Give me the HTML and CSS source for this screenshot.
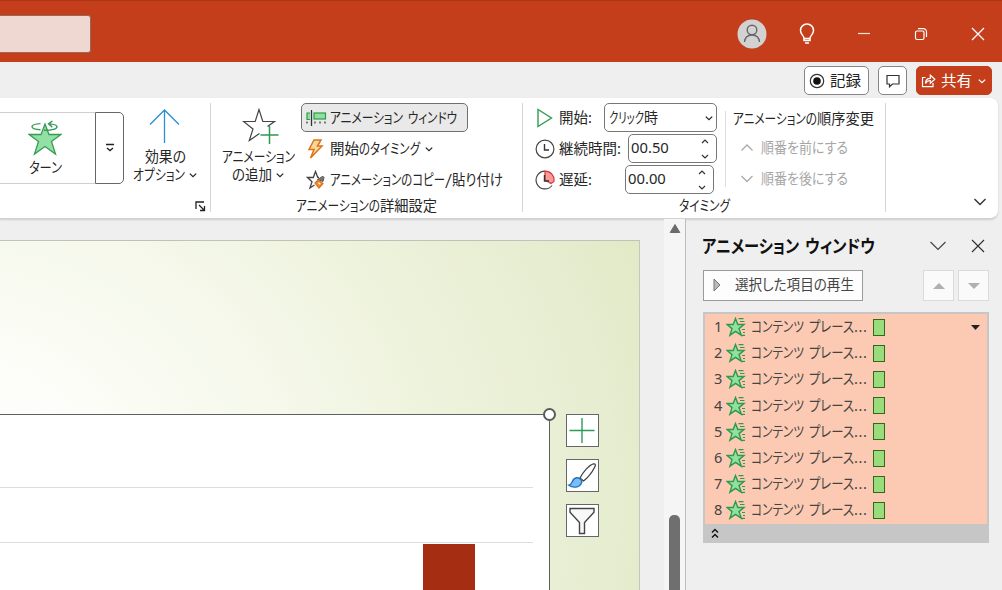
FILE: index.html
```html
<!DOCTYPE html>
<html lang="ja">
<head>
    <meta charset="UTF-8">
    <meta name="viewport" content="width=device-width, initial-scale=1.0">
    <title>アニメーション ウィンドウ</title>
    <link rel="stylesheet" href="styles.css">
</head>
<body>
    <svg class="defs" width="0" height="0">
        <symbol id="chev" viewBox="0 0 10 10"><path d="M1.8 3.6 5 6.6 8.2 3.6" fill="none" stroke="currentColor" stroke-width="1.3"/></symbol>
        <symbol id="effect" viewBox="0 0 20 20">
            <path d="M9.5 1.5 11.8 7.5H18L13 11.6l2.3 6.6-5.8-3.8-5.6 3.8L6 11.6 1 7.5h6.2z" fill="#90e0a0" stroke="#2f9a4c" stroke-width="1.4"/>
            <path d="M12.500 1.600h5M14 4.500h4.500M16 12.500h3M17 15.500h2M16 18.400h3" stroke="#2f9a4c" stroke-width="1.200"/>
        </symbol>
    </svg>

    <div class="titlebar">
        <div class="search"></div>
        <div class="window-tools">
            <svg class="avatar" width="30" height="30" viewBox="0 0 30 30"><circle cx="15" cy="15" r="14.500" fill="#d2d2d2"/><circle cx="15" cy="11" r="4.800" fill="none" stroke="#666" stroke-width="1.400"/><path d="M7.500 23c.5-4.500 3.500-7 7.500-7s7 2.500 7.500 7" fill="none" stroke="#666" stroke-width="1.400"/></svg>
            <svg class="bulb" width="16" height="22" viewBox="0 0 16 22"><path d="M5 15.500C5 12.500 1.500 11.500 1.500 7.500a6.500 6.500 0 0 1 13 0c0 4-3.500 5-3.500 8zM5 15.500V17.500h6v-2M6 20h4" fill="none" stroke="#fff" stroke-width="1.500"/></svg>
            <svg class="minimize" width="14" height="14" viewBox="0 0 14 14"><path d="M1 6.500h12" stroke="#fbe3da" stroke-width="1.200"/></svg>
            <svg class="restore" width="14" height="14" viewBox="0 0 14 14"><rect x="1.500" y="4" width="8.500" height="8.500" rx="1.500" fill="none" stroke="#fff" stroke-width="1.200"/><path d="M4 1.700h5.500a3 3 0 0 1 3 3V10" fill="none" stroke="#fff" stroke-width="1.200"/></svg>
            <svg class="close" width="14" height="14" viewBox="0 0 14 14"><path d="M1 1l12 12M13 1 1 13" stroke="#fff" stroke-width="1.300"/></svg>
        </div>
    </div>

    <div class="tabrow">
        <button class="tab-btn record">
            <svg width="16" height="16" viewBox="0 0 16 16"><circle cx="8" cy="8" r="6.700" fill="none" stroke="#333" stroke-width="1.200"/><circle cx="8" cy="8" r="3.800" fill="#111"/></svg>
            <span class="fit" data-w="31">記録</span>
        </button>
        <button class="tab-btn comment">
            <svg width="14" height="14" viewBox="0 0 14 14"><path d="M1 1.500h12v8.500H6.500L3.500 12.800V10H1z" fill="none" stroke="#333" stroke-width="1.200"/></svg>
        </button>
        <button class="tab-btn share">
            <svg width="15" height="15" viewBox="0 0 15 15"><path d="M4.500 4.500H1.500v9.200h10.500V10" fill="none" stroke="#fff" stroke-width="1.200"/><path d="M4.500 10.500C4.500 7 6.500 5.300 9.300 5.300V2.200L13.800 6.300 9.300 10.300V7.500C7 7.500 5.500 8.500 4.500 10.500z" fill="none" stroke="#fff" stroke-width="1.200"/></svg>
            <span class="fit" data-w="31">共有</span>
            <svg class="chev" width="10" height="10"><use href="#chev"/></svg>
        </button>
    </div>

    <div class="ribbon">
        <div class="group group-gallery">
            <div class="gallery">
                <div class="gallery-item">
                    <svg width="34" height="36" viewBox="0 0 34 36">
                        <path d="M17 4 21 14.500H33L23.500 21.500 27.500 34 17 26.500 6.500 34 10.500 21.500 1 14.500H13z" fill="#92e0a4" stroke="#379b55" stroke-width="1.300"/>
                        <path d="M12.500 9.800C7 9.500 4 8.200 4 6.600S7 4 12.500 3.600M16 10.300c6 0 13-1 13-3.500 0-1.500-3-2.500-8-2.900M24.500 1 20.500 3.900l3.800 3.200" fill="none" stroke="#379b55" stroke-width="1.400"/>
                    </svg>
                    <span class="fit" data-w="33">ターン</span>
                </div>
                <div class="gallery-more">
                    <svg width="10" height="10" viewBox="0 0 10 10"><path d="M1 1.500h8M2 5l3 2.600L8 5" fill="none" stroke="#222" stroke-width="1.300"/></svg>
                </div>
            </div>
            <div class="big-btn effect-options">
                <svg width="34" height="36" viewBox="0 0 34 36"><path d="M16.500 35V2M2 16.500 16.500 2 31 16.500" fill="none" stroke="#2c8ed4" stroke-width="1.300"/></svg>
                <div class="line"><span class="fit" data-w="41">効果の</span></div>
                <div class="line"><span class="fit" data-w="52">オプション</span><svg class="chev" width="10" height="10"><use href="#chev"/></svg></div>
            </div>
            <svg class="launcher" width="11" height="11" viewBox="0 0 11 11"><path d="M1 8V1h8M4 4l5 5M9.500 5v4.500H5" fill="none" stroke="#222" stroke-width="1.300"/></svg>
        </div>

        <div class="group group-advanced">
            <div class="group-body">
                <div class="big-btn add-animation">
                    <svg width="38" height="36" viewBox="0 0 38 36"><path d="M25.500 18.500 32.500 13.500H20.800L17 1.500 13.200 13.500H1.500L11 21 7.300 32.500 17.500 25.500" fill="none" stroke="#444" stroke-width="1.200"/><path d="M27.500 18v18M18.500 27h18" stroke="#2f9a4c" stroke-width="1.500"/></svg>
                    <div class="line"><span class="fit" data-w="73">アニメーション</span></div>
                    <div class="line"><span class="fit" data-w="40">の追加</span><svg class="chev" width="10" height="10"><use href="#chev"/></svg></div>
                </div>
                <div class="commands">
                    <div class="command active">
                        <svg width="22" height="16" viewBox="0 0 22 16"><path d="M5.500 0v16" stroke="#333" stroke-width="1.300"/><path d="M4 3H1v6.500h3" fill="#90e0a0" stroke="#2f9a4c" stroke-width="1.200"/><rect x="8" y="3" width="11.500" height="6" fill="#90e0a0" stroke="#2f9a4c" stroke-width="1.200"/><path d="M1 11.500v2M9 11.500v2M14 11.500v2M19 11.500v2" stroke="#333" stroke-width="1.200"/></svg>
                        <span class="fit" data-w="73">アニメーション</span><span class="fit second" data-w="49">ウィンドウ</span>
                    </div>
                    <div class="command">
                        <svg width="22" height="20" viewBox="0 0 22 20"><path d="M8 1h7L11.500 7H16L4.500 19 8 10.500H3z" fill="#fbd7a0" stroke="#dd7418" stroke-width="1.500"/></svg>
                        <span class="fit" data-w="29">開始</span><span class="fit" data-w="61">のタイミング</span><svg class="chev" width="10" height="10"><use href="#chev"/></svg>
                    </div>
                    <div class="command">
                        <svg width="22" height="20" viewBox="0 0 22 20"><path d="M13 7.500h-1.200L9.500 1.500 7.300 7.500H1.500l4.500 4.300-2 6.200 4.500-3" fill="none" stroke="#444" stroke-width="1.300"/><path d="M11.500 9.500 15 7.500l1.500-1.500 1.500 1.500-1 4z" fill="#777" stroke="#555"/><path d="M9 13l3-3 5 3.500-4 4.500z" fill="#f08a2a" stroke="#dd7418" stroke-width="1.200"/><path d="M12.500 12.800l1.800 1.500" stroke="#fff" stroke-width="1.300"/></svg>
                        <span class="fit" data-w="115">アニメーションのコピー</span><span class="fit" data-w="7">/</span><span class="fit" data-w="51">貼り付け</span>
                    </div>
                </div>
            </div>
            <div class="caption"><span class="fit" data-w="84">アニメーションの</span><span class="fit" data-w="57">詳細設定</span></div>
        </div>

        <div class="group group-timing">
            <div class="group-body">
                <div class="timing-fields">
                    <div class="field">
                        <svg width="20" height="20" viewBox="0 0 20 20"><path d="M3 1.500v17L16.500 10z" fill="#fff" stroke="#379b55" stroke-width="1.400"/></svg>
                        <label class="name-start"><span class="fit" data-w="29">開始</span>:</label>
                        <div class="box start-box"><span class="fit" data-w="35">クリック</span><span class="fit" data-w="14">時</span><svg class="chev" width="10" height="10"><use href="#chev"/></svg></div>
                    </div>
                    <div class="field">
                        <svg width="20" height="20" viewBox="0 0 20 20"><circle cx="10" cy="10" r="8.900" fill="#fff" stroke="#444" stroke-width="1.200"/><path d="M9.500 5v6H14" fill="none" stroke="#333" stroke-width="1.400"/></svg>
                        <label class="name-duration"><span class="fit" data-w="58">継続時間</span>:</label>
                        <div class="box spin"><span class="value">00.50</span><svg width="8" height="24" viewBox="0 0 8 24"><path d="M1 6l3-3 3 3M1 18l3 3 3-3" fill="none" stroke="#333" stroke-width="1.200"/></svg></div>
                    </div>
                    <div class="field">
                        <svg width="20" height="20" viewBox="0 0 20 20"><path d="M10 1.100A8.900 8.900 0 1 0 17 15.500" fill="#fff" stroke="#444" stroke-width="1.200"/><path d="M10 10V1.100A8.900 8.900 0 0 1 18.900 11.500L16 13.500z" fill="#f79a9a" stroke="#d93636" stroke-width="1.200"/><path d="M9.500 5v6H14" fill="none" stroke="#333" stroke-width="1.400"/></svg>
                        <label class="name-delay"><span class="fit" data-w="29">遅延</span>:</label>
                        <div class="box spin"><span class="value">00.00</span><svg width="8" height="24" viewBox="0 0 8 24"><path d="M1 6l3-3 3 3M1 18l3 3 3-3" fill="none" stroke="#333" stroke-width="1.200"/></svg></div>
                    </div>
                </div>
                <div class="reorder">
                    <div class="reorder-title"><span class="fit" data-w="84">アニメーションの</span><span class="fit" data-w="57">順序変更</span></div>
                    <div class="reorder-row"><svg width="14" height="10" viewBox="0 0 14 10"><path d="M1.500 7.500 7 2l5.500 5.500" fill="none" stroke="#aaa" stroke-width="1.300"/></svg><span class="fit" data-w="87">順番を前にする</span></div>
                    <div class="reorder-row"><svg width="14" height="10" viewBox="0 0 14 10"><path d="M1.500 2 7 7.500 12.500 2" fill="none" stroke="#aaa" stroke-width="1.300"/></svg><span class="fit" data-w="87">順番を後にする</span></div>
                </div>
            </div>
            <div class="caption"><span class="fit" data-w="51">タイミング</span></div>
        </div>
        <svg class="collapse" width="14" height="10" viewBox="0 0 14 10"><path d="M1.500 2 7 7.500 12.500 2" fill="none" stroke="#333" stroke-width="1.400"/></svg>
    </div>

    <div class="workspace">
        <div class="canvas">
            <div class="slide">
                <div class="chart">
                    <div class="handle"></div>
                    <div class="gridline"></div>
                    <div class="gridline"></div>
                    <div class="bar"></div>
                </div>
                <div class="chart-tools">
                    <div class="chart-tool"><svg width="31" height="31" viewBox="0 0 31 31"><path d="M15 3v25M2.500 15.500h25" stroke="#2f9a58" stroke-width="1.400"/></svg></div>
                    <div class="chart-tool"><svg width="31" height="31" viewBox="0 0 31 31"><path d="M13 18C16 12 22 5 26.500 3.800 29 3.500 28.500 6 27.500 7.500 25 12.500 21 17.500 16.500 21z" fill="#fff" stroke="#444" stroke-width="1.300"/><path d="M1.800 25.200C6 24.500 4.500 18.500 9.500 17.800c4-.3 6.500 3.200 4.500 6.200-2.500 4-8.500 4-12.200 1.200z" fill="#7dbcf4" stroke="#1c74bd" stroke-width="1.400"/></svg></div>
                    <div class="chart-tool"><svg width="31" height="31" viewBox="0 0 31 31"><path d="M3 3.500h24v3.700L17.500 17.500v11h-5v-11L3 7.200z" fill="#f8f8f8" stroke="#444" stroke-width="1.400"/></svg></div>
                </div>
            </div>
        </div>
        <div class="scrollbar">
            <svg width="12" height="9" viewBox="0 0 12 9"><path d="M6 .5 10.800 8.500H1.200z" fill="#6b6b6b" stroke="#6b6b6b" stroke-linejoin="round"/></svg>
            <div class="thumb"></div>
        </div>
        <div class="pane">
            <div class="pane-head">
                <span class="fit" data-w="97">アニメーション</span><span class="fit second" data-w="70">ウィンドウ</span>
                <svg class="pane-menu" width="18" height="12" viewBox="0 0 18 12"><path d="M1.500 2 9 9.500 16.500 2" fill="none" stroke="#444" stroke-width="1.200"/></svg>
                <svg class="pane-close" width="14" height="14" viewBox="0 0 14 14"><path d="M1 1l12 12M13 1 1 13" stroke="#333" stroke-width="1.200"/></svg>
            </div>
            <div class="pane-actions">
                <div class="play"><svg width="8" height="14" viewBox="0 0 8 14"><path d="M1 1v12l6-6z" fill="#bbb" stroke="#777"/></svg><span class="fit" data-w="119">選択した項目の再生</span></div>
                <div class="move"><svg width="12" height="6" viewBox="0 0 12 6"><path d="M0 6 6 0l6 6z" fill="#b0b0b0"/></svg></div>
                <div class="move"><svg width="12" height="6" viewBox="0 0 12 6"><path d="M0 0l6 6 6-6z" fill="#b0b0b0"/></svg></div>
            </div>
            <div class="list">
                <div class="rows" id="rows"></div>
                <div class="list-foot"><svg width="8" height="11" viewBox="0 0 8 11"><path d="M1 4.500l3-3 3 3M1 9.500l3-3 3 3" fill="none" stroke="#111" stroke-width="1.400"/></svg></div>
            </div>
        </div>
    </div>
    <script src="script.js"></script>
</body>
</html>
```

FILE: styles.css
```css
* {
    box-sizing: border-box;
}

body {
    margin: 0;
    width: 1002px;
    height: 590px;
    overflow: hidden;
    background-color: #efefef;
    color: #262626;
    font-family: "Noto Sans", "Noto Sans CJK JP", sans-serif;
    font-size: 14.5px;
    line-height: 18px;
}

svg {
    display: block;
    flex: none;
}

.defs {
    position: absolute;
}

/* width is set from data-w */
.fit {
    display: inline-block;
    flex: none;
    white-space: nowrap;
    padding-bottom: 2px;
    font-family: "Noto Sans CJK JP", sans-serif;
    font-feature-settings: "palt";
    transform-origin: left center;
}

/* title bar */
.titlebar {
    display: flex;
    justify-content: space-between;
    height: 62px;
    padding-top: 15px;
    background-color: #c43e1c;
    border-top: 1px solid #ad3516;
}

.search {
    width: 91px;
    height: 38px;
    margin-top: -1px;
    background-color: #efd8d2;
    border: 1px solid #95685b;
    border-left: 0;
    border-radius: 0 3px 3px 0;
}

.window-tools {
    display: flex;
    align-items: center;
    height: 36px;
    padding-right: 17px;
}

.bulb {
    margin-left: 32px;
}

.minimize {
    margin-left: 42px;
}

.restore {
    margin-left: 43px;
}

.close {
    margin-left: 43px;
}

/* buttons above the ribbon */
.tabrow {
    display: flex;
    justify-content: flex-end;
    height: 36px;
    padding: 4px 10px 0 0;
}

.tab-btn {
    display: flex;
    align-items: center;
    height: 29px;
    padding: 0;
    border: 1px solid #868686;
    border-radius: 5px;
    background-color: #fff;
    color: #222;
    font-size: 15px;
}

.record {
    width: 65px;
    padding-left: 4px;
    gap: 5px;
}

.comment {
    width: 29px;
    margin-left: 9px;
    justify-content: center;
}

.share {
    width: 76px;
    margin-left: 9px;
    padding-left: 4px;
    gap: 5px;
    background-color: #c43e1c;
    border-color: #c43e1c;
    color: #fff;
}

/* ribbon */
.ribbon {
    display: flex;
    width: 998px;
    height: 121px;
    padding-top: 5px;
    background-color: #fff;
    border-bottom: 1px solid #d2d2d2;
    border-radius: 0 8px 8px 0;
    box-shadow: 0 1px 2px #ccc;
}

.group {
    height: 109px;
    border-right: 1px solid #d4d4d4;
}

.group-body {
    display: flex;
    height: 93px;
}

.caption {
    display: flex;
    justify-content: center;
}

.group-gallery {
    display: grid;
    grid-template-columns: 124px 1fr;
    grid-template-rows: 98px 11px;
    width: 211px;
}

.gallery {
    display: flex;
    height: 72px;
    margin-top: 9px;
}

.gallery-item {
    display: flex;
    flex-direction: column;
    align-items: center;
    width: 95px;
    padding: 7px 5px 0 0;
    border-top: 1px solid #cfcfcf;
    border-bottom: 1px solid #cfcfcf;
}

.gallery-item .fit {
    margin-top: 2px;
}

.gallery-more {
    display: flex;
    align-items: center;
    justify-content: center;
    width: 29px;
    border: 1px solid #666;
    border-radius: 0 5px 5px 0;
}

.big-btn {
    display: flex;
    flex-direction: column;
    align-items: center;
}

.big-btn .line {
    display: flex;
    align-items: center;
    height: 18px;
}

.big-btn .chev {
    margin-left: 3px;
}

.effect-options {
    padding: 5px 4px 0 0;
}

.effect-options > svg {
    margin-bottom: 4px;
}

.launcher {
    grid-column: 2;
    justify-self: end;
    margin-right: 4px;
}

.group-advanced {
    width: 312px;
}

.add-animation {
    width: 90px;
    padding: 5px 0 0 5px;
}

.add-animation > svg {
    margin: 0 0 4px 5px;
}

.command {
    display: flex;
    align-items: center;
    height: 31px;
    padding-left: 5px;
}

.command > svg:first-child {
    margin-right: 2px;
}

.command .chev {
    margin-left: 4px;
}

.command.active {
    width: 167px;
    height: 29px;
    margin-bottom: 1px;
    padding-left: 4px;
    background-color: #e9e9e9;
    border: 1px solid #707070;
    border-radius: 5px;
}

.second {
    margin-left: 5px;
}

.group-timing {
    width: 363px;
}

.timing-fields {
    padding-left: 12px;
    width: 202px;
}

.field {
    display: flex;
    align-items: center;
    height: 31px;
}

.field:first-child {
    height: 29px;
    margin-bottom: 1px;
}

.field label {
    display: flex;
    padding-left: 4px;
}

.name-start {
    width: 49px;
}

.name-duration {
    width: 73px;
}

.name-delay {
    width: 70px;
}

.box {
    display: flex;
    align-items: center;
    height: 29px;
    border: 1px solid #777;
    border-radius: 5px;
    padding-left: 4px;
    background-color: #fff;
}

.start-box {
    width: 113px;
}

.start-box .chev {
    margin-left: auto;
    margin-right: 2px;
}

.spin {
    width: 89px;
    padding-left: 2px;
    font-size: 14.8px;
}

.value {
    padding-bottom: 3px;
}

.spin svg {
    margin-left: auto;
    margin-right: 7px;
}

.reorder {
    margin-top: 8px;
    height: 76px;
    padding-left: 7px;
    border-left: 1px solid #ddd;
}

.reorder-title {
    display: flex;
    height: 23px;
    margin-top: -2px;
}

.reorder-row {
    display: flex;
    align-items: center;
    height: 31px;
    padding-left: 7px;
    gap: 7px;
    color: #a6a6a6;
}

.collapse {
    margin: 94px 0 0 87px;
}

/* slide area */
.workspace {
    display: flex;
    height: 371px;
}

.canvas {
    width: 664px;
    padding-top: 21px;
}

.slide {
    display: flex;
    width: 640px;
    height: 350px;
    padding-top: 173px;
    border-top: 1px solid #bfc3b6;
    border-right: 1px solid #c3c7bc;
    background: radial-gradient(ellipse 800px 680px at -60px 260px, #fff 0%, #fdfefa 18%, #f5f8ea 45%, #edf2db 65%, #e7edd1 83%, #dfe8c2 100%);
}

.chart {
    position: relative;
    width: 550px;
    height: 180px;
    background-color: #fff;
    border-top: 1.5px solid #606060;
    border-right: 1.5px solid #606060;
}

.handle {
    position: absolute;
    top: -7px;
    right: -7px;
    width: 13px;
    height: 13px;
    border: 2px solid #5a5a5a;
    border-radius: 50%;
    background-color: #fff;
}

.gridline {
    width: 533px;
    height: 55px;
    border-bottom: 1px solid #dcdcdc;
}

.gridline:nth-child(2) {
    height: 73px;
}

.bar {
    width: 52px;
    height: 50px;
    margin: 1px 0 0 423px;
    background-color: #a52d12;
}

.chart-tools {
    display: flex;
    flex-direction: column;
    gap: 12px;
    margin-left: 16px;
}

.chart-tool {
    width: 33px;
    height: 33px;
    border: 1px solid #666;
    background-color: #fff;
}

.scrollbar {
    display: flex;
    flex-direction: column;
    align-items: center;
    width: 22px;
    padding-top: 5px;
    background-color: #f5f5f5;
    border-right: 1px solid #bdbdbd;
}

.thumb {
    width: 11px;
    height: 90px;
    flex: none;
    margin-top: 282px;
    border-radius: 5px;
    background-color: #6f6f6f;
}

/* animation pane */
.pane {
    width: 316px;
    padding: 15px 13px 0 17px;
}

.pane-head {
    display: flex;
    align-items: center;
    height: 23px;
    margin-left: -1px;
    color: #111;
    font-size: 18px;
    font-weight: bold;
}

.pane-head .second {
    margin-left: 6px;
}

.pane-menu {
    margin-left: auto;
    margin-right: 24px;
}

.pane-close {
    margin-right: 4px;
}

.pane-actions {
    display: flex;
    height: 31px;
    margin-top: 13px;
}

.play {
    display: flex;
    align-items: center;
    width: 161px;
    margin-right: 56px;
    padding: 0 0 1px 9px;
    gap: 14px;
    border: 1px solid #9a9a9a;
    background-color: #fdfdfd;
    color: #444;
}

.move {
    display: flex;
    align-items: center;
    justify-content: center;
    width: 31px;
    margin-left: 4px;
    border: 1px solid #dadada;
    background-color: #fafafa;
}

.list {
    height: 231px;
    margin-top: 11px;
    border: 2px solid #c6c6c6;
    border-bottom: 0;
    background-color: #c6c6c6;
}

.rows {
    height: 210px;
    background-color: #fccab3;
}

.row {
    display: flex;
    align-items: center;
    height: 26.2px;
    padding-left: 9px;
    color: #444;
}

.num {
    width: 12px;
    padding-bottom: 2px;
}

.name {
    display: flex;
    margin-left: 5px;
}

.name .second {
    margin-left: 5px;
}

.dots {
    letter-spacing: 0.6px;
}

.swatch {
    width: 12px;
    height: 17px;
    margin-left: 6px;
    border: 1px solid #33691e;
    background-color: #98dc7c;
}

.arrow {
    margin-left: auto;
    margin-right: 7px;
}

.list-foot {
    padding: 4px 0 0 6px;
}
```

FILE: script.js
```js
const rows = document.getElementById("rows");

for (let i = 1; i <= 8; i++) {
    const row = document.createElement("div");
    row.className = "row";
    row.innerHTML = `
        <span class="num">${i}</span>
        <svg width="20" height="20"><use href="#effect"/></svg>
        <span class="name"><span class="fit" data-w="53">コンテンツ</span><span class="fit second" data-w="45">プレース</span><span class="dots">...</span></span>
        <span class="swatch"></span>
        ${i === 1 ? '<svg class="arrow" width="9" height="5" viewBox="0 0 9 5"><path d="M0 0h9L4.500 5z" fill="#222"/></svg>' : ''}
    `;
    rows.appendChild(row);
}

document.querySelectorAll(".fit").forEach(el => {
    const natural = el.getBoundingClientRect().width;
    const width = Number(el.dataset.w);
    el.style.transform = `scaleX(${width / natural})`;
    el.style.marginRight = (width - natural) + "px";
});
```
